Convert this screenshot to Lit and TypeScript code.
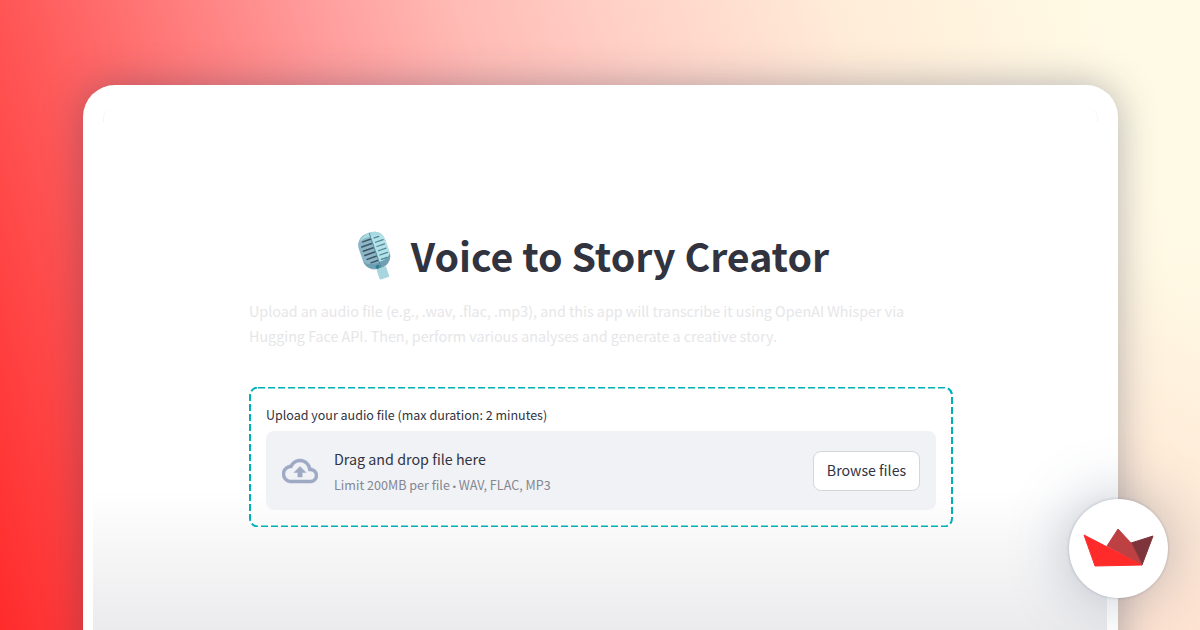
import { LitElement, css, html } from 'lit'
import { customElement } from 'lit/decorators.js'

@customElement('app-root')
export class AppRoot extends LitElement {
  render() {
    return html`
      <div class="page">
        <div class="card">
          <div class="panel">
            <div class="content">
              <h1 class="title">
                <svg class="mic" viewBox="0 0 40 50" aria-hidden="true">
                  <g transform="rotate(-19 20 22)">
                    <rect x="6" y="1" width="28" height="37" rx="12" fill="#8ab6c8" />
                    <path d="M21 1c7 0 13 5 13 12v13c0 7-6 12-13 12z" fill="#b5e2e9" />
                    <path d="M9 6c3-3 7-5 12-5 6 0 10 2 12 6-6-2-17-3-24-1z" fill="#a8d8e0" />
                    <path d="M6 26c0 7 7 12 15 12 7 0 13-5 13-12 0 3-6 6-13 6S7 30 6 26z" fill="#6f9fb2" />
                    <g stroke="#3f5560" stroke-width="1.5" stroke-linecap="round">
                      <path d="M12 7.5h8M9.5 12h10.5M9.5 16.5h10.5M9.5 21h10.5M10.5 25.5h9.5M13 30h7" />
                    </g>
                    <g stroke="#4d8796" stroke-width="1.3" stroke-linecap="round">
                      <path d="M24 7.5h5M24 12h8M24 16.5h8M24 21h8M24 25.5h8M24 30h6" />
                    </g>
                    <path d="M21 1v37" stroke="#4d8796" stroke-width="0.8" />
                    <rect x="16" y="38" width="10" height="11" rx="1" fill="#a9d5df" />
                    <circle cx="18" cy="36" r="2" fill="#2f7f8f" />
                  </g>
                </svg>
                <span>Voice to Story Creator</span>
              </h1>
              <p class="desc">
                Upload an audio file (e.g., .wav, .flac, .mp3), and this app will transcribe it using OpenAI Whisper via
                Hugging Face API. Then, perform various analyses and generate a creative story.
              </p>
              <section class="uploader">
                <svg class="dash" width="704" height="140" aria-hidden="true">
                  <rect x="1" y="0.5" width="702" height="139" rx="8" />
                </svg>
                <label class="label">Upload your audio file (max duration: 2 minutes)</label>
                <div class="drop">
                  <svg class="cloud" viewBox="0 0 24 24" aria-hidden="true">
                    <path
                      d="M19.35 10.04C18.67 6.59 15.64 4 12 4 9.11 4 6.6 5.64 5.35 8.04 2.34 8.36 0 10.91 0 14c0 3.31 2.69 6 6 6h13c2.76 0 5-2.24 5-5 0-2.64-2.05-4.78-4.65-4.96zM19 18H6c-2.21 0-4-1.79-4-4 0-2.05 1.53-3.76 3.56-3.97l1.07-.11.5-.95C8.08 7.14 9.94 6 12 6c2.62 0 4.88 1.86 5.39 4.43l.3 1.5 1.53.11c1.56.1 2.78 1.41 2.78 2.96 0 1.65-1.35 3-3 3zM8 13h2.55v3h2.9v-3H16l-4-4z"
                    />
                  </svg>
                  <div class="hint">
                    <span class="hint-main">Drag and drop file here</span>
                    <small class="hint-sub">Limit 200MB per file <span class="dot">•</span> WAV, FLAC, MP3</small>
                  </div>
                  <button class="browse">Browse files</button>
                </div>
              </section>
            </div>
          </div>
        </div>
        <div class="badge">
          <svg viewBox="0 0 99 99" width="99" height="99" aria-hidden="true">
            <path d="M62 44 84 37 73 66z" fill="#7d353b" stroke="#7d353b" stroke-linejoin="round" />
            <path d="M49 30 38 47 73 66 62 44z" fill="#bd4043" stroke="#bd4043" stroke-linejoin="round" />
            <path d="M15 36 73 66 26 67z" fill="#ff2b2b" stroke="#ff2b2b" stroke-linejoin="round" />
          </svg>
        </div>
      </div>
    `
  }

  static styles = css`
    :host {
      display: block;
      font-family: 'Noto Sans CJK SC', 'Noto Sans', sans-serif;
      color: #31333f;
    }

    .page {
      position: relative;
      box-sizing: border-box;
      width: 1200px;
      height: 630px;
      overflow: hidden;
      padding: 85px 82px 0 83px;
      background:
        radial-gradient(ellipse 380px 380px at 100% 100%, rgba(253, 215, 200, 0.6), rgba(253, 215, 200, 0)),
        linear-gradient(72deg, #ff2b2b 0%, #ff5555 14.5%, #ff9a9a 36%, #ffbbb5 47%, #ffd0c6 58%, #ffecd8 74%, #fffae5 92%);
    }

    .card {
      box-sizing: border-box;
      height: 600px;
      padding: 20px 11px 0 10px;
      background: #fff;
      border-radius: 32px 32px 0 0;
      box-shadow: 0 0 38px rgba(40, 50, 80, 0.35);
    }

    .panel {
      position: relative;
      height: 100%;
      background: linear-gradient(180deg, #fff 0, #fff 385px, #ebebed 525px);
    }

    .panel::before,
    .panel::after {
      content: '';
      position: absolute;
      top: 2px;
      width: 12px;
      height: 15px;
      border-left: 1px solid rgba(0, 0, 0, 0.04);
      border-radius: 12px 0 0 0;
    }

    .panel::before {
      left: 10px;
    }

    .panel::after {
      right: 9px;
      transform: scaleX(-1);
    }

    .content {
      box-sizing: border-box;
      width: 704px;
      margin-left: 156px;
      padding-top: 118px;
    }

    .title {
      display: flex;
      align-items: center;
      justify-content: center;
      gap: 16px;
      margin: 0;
      padding-right: 18px;
      height: 66px;
      font-size: 39.3px;
      font-weight: 700;
      line-height: 60px;
      color: #31333f;
    }

    .title span {
      margin-top: -2px;
    }

    .mic {
      width: 40px;
      height: 50px;
      flex: none;
    }

    .desc {
      margin: 9px 0 0;
      font-size: 14.3px;
      line-height: 25px;
      color: #e6e6e8;
    }

    .uploader {
      position: relative;
      box-sizing: border-box;
      height: 140px;
      margin-top: 39px;
      padding: 17px;
    }

    .dash {
      position: absolute;
      left: 0;
      top: 0;
      pointer-events: none;
    }

    .dash rect {
      fill: none;
      stroke: #00b0b9;
      stroke-width: 2;
      stroke-dasharray: 7 3;
    }

    .label {
      display: block;
      font-size: 12.5px;
      line-height: 22px;
      height: 27px;
    }

    .drop {
      display: flex;
      align-items: center;
      height: 79px;
      box-sizing: border-box;
      padding: 0 16px;
      background: #f0f2f6;
      border-radius: 8px;
    }

    .cloud {
      width: 36px;
      height: 36px;
      flex: none;
      fill: #9ea9c4;
      stroke: #9ea9c4;
      stroke-width: 0.35;
    }

    .hint {
      display: flex;
      flex-direction: column;
      flex: 1;
      margin-left: 16px;
      padding-top: 2px;
    }

    .hint-main {
      font-size: 14.3px;
      line-height: 24px;
    }

    .hint-sub {
      margin-top: 4px;
      font-size: 12.6px;
      line-height: 20px;
      color: #85868f;
    }

    .dot {
      font-family: 'Liberation Sans', sans-serif;
      font-size: 9px;
    }

    .browse {
      box-sizing: border-box;
      width: 107px;
      height: 40px;
      padding: 0 0 2px;
      font: inherit;
      font-size: 14.2px;
      color: #31333f;
      background: #fff;
      border: 1px solid #d5d6da;
      border-radius: 8px;
    }

    .badge {
      position: absolute;
      left: 1069px;
      top: 499px;
      width: 99px;
      height: 99px;
      background: #fff;
      border-radius: 50%;
      box-shadow:
        0 0 3px rgba(60, 70, 100, 0.3),
        0 0 60px rgba(60, 80, 110, 0.36);
    }

    .badge svg {
      display: block;
    }
  `
}

declare global {
  interface HTMLElementTagNameMap {
    'app-root': AppRoot
  }
}
